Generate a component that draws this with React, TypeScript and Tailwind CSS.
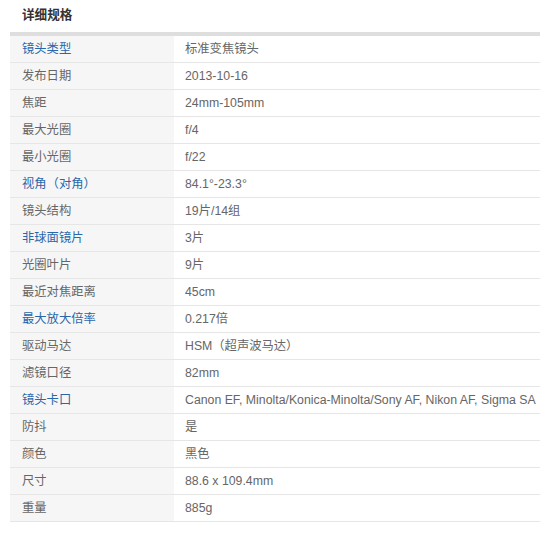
import React from "react";

const rows: [string, string, boolean][] = [
  ["镜头类型", "标准变焦镜头", true],
  ["发布日期", "2013-10-16", false],
  ["焦距", "24mm-105mm", false],
  ["最大光圈", "f/4", false],
  ["最小光圈", "f/22", false],
  ["视角（对角）", "84.1°-23.3°", true],
  ["镜头结构", "19片/14组", false],
  ["非球面镜片", "3片", true],
  ["光圈叶片", "9片", false],
  ["最近对焦距离", "45cm", false],
  ["最大放大倍率", "0.217倍", true],
  ["驱动马达", "HSM（超声波马达）", false],
  ["滤镜口径", "82mm", false],
  ["镜头卡口", "Canon EF, Minolta/Konica-Minolta/Sony AF, Nikon AF, Sigma SA", true],
  ["防抖", "是", false],
  ["颜色", "黑色", false],
  ["尺寸", "88.6 x 109.4mm", false],
  ["重量", "885g", false],
];

export default function App() {
  return (
    <div
      className="w-[540px] h-[535px] bg-white overflow-hidden"
      style={{ fontFamily: '"Liberation Sans", Arial, "Noto Sans CJK SC", sans-serif' }}
    >
      <div className="h-[32px] pl-[22px] pt-[6px] text-[12.6px] font-bold text-[#333] leading-[18px]">
        详细规格
      </div>
      <div className="ml-[10px] border-t-[4px] border-[#dedede]">
        {rows.map(([k, v, blue], i) => (
          <div key={i} className="flex h-[27px] border-b border-[#e6e6e6] text-[12.3px] leading-[26px]">
            <div
              className={
                "w-[164px] shrink-0 bg-[#f6f6f6] pl-[12px] " +
                (blue ? "text-[#2a66aa]" : "text-[#666]")
              }
            >
              {k}
            </div>
            <div className="pl-[11px] text-[#666] whitespace-nowrap">{v}</div>
          </div>
        ))}
      </div>
    </div>
  );
}
